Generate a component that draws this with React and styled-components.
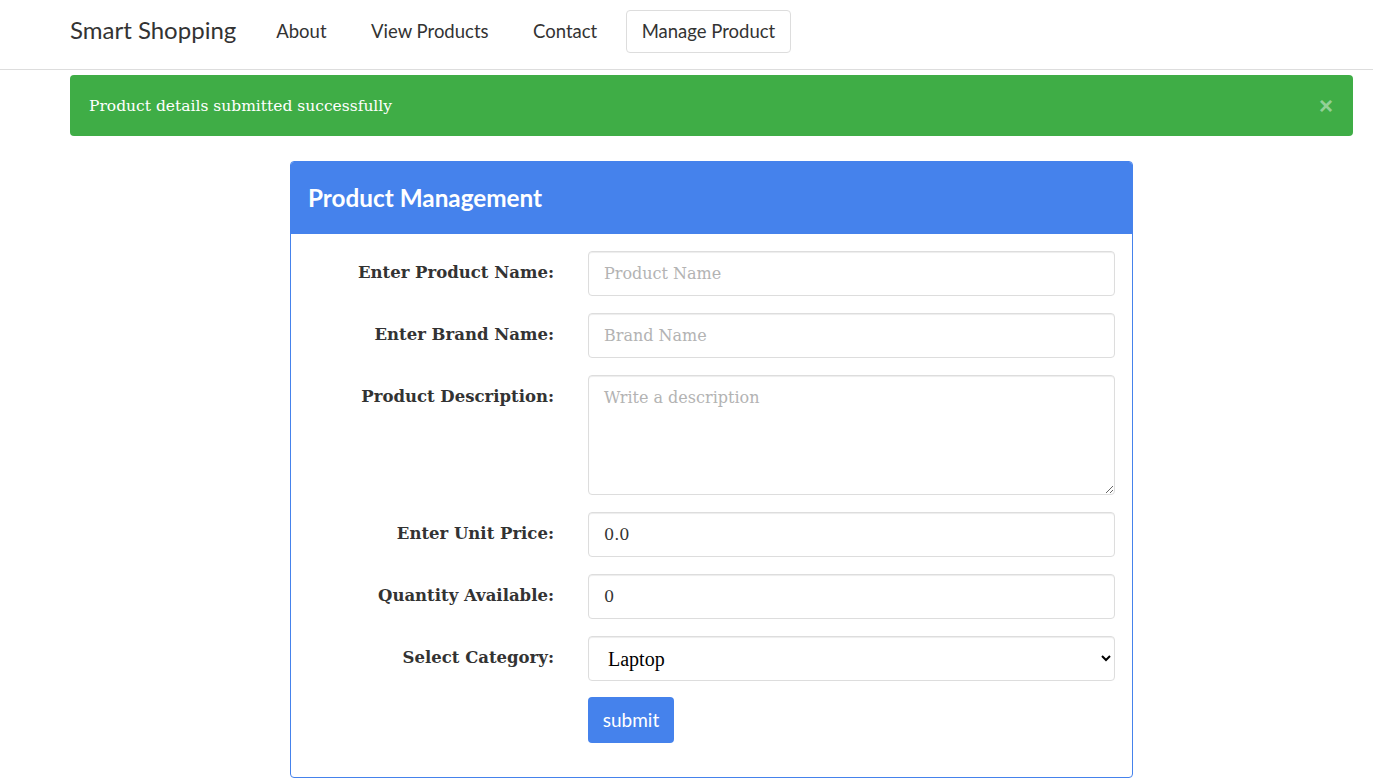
import styled, { createGlobalStyle } from "styled-components";

const serif = `"DejaVu Serif", "Liberation Serif", serif`;
const sans = `Lato, "Open Sans", sans-serif`;

const GlobalStyle = createGlobalStyle`
  body {
    margin: 0;
    background: #fff;
    font-family: ${serif};
    color: #333;
  }
  * { box-sizing: border-box; }
`;

const Navbar = styled.nav`
  height: 70px;
  border-bottom: 1px solid #dddddd;
  display: flex;
  align-items: flex-start;
  padding: 10px 0 0 70px;
  font-family: ${sans};
`;

const Brand = styled.a`
  font-size: 24px;
  line-height: 40px;
  color: #333;
  margin-right: 24px;
`;

const NavLink = styled.a`
  font-size: 18.5px;
  line-height: 21px;
  color: #333;
  padding: 10px 15px;
  margin-right: ${(p) => (p.$active ? 0 : 12.5)}px;
  border: 1px solid ${(p) => (p.$active ? "#dddddd" : "transparent")};
  border-radius: 4px;
`;

const Page = styled.div`
  padding: 5px 20px 20px 70px;
`;

const Alert = styled.div`
  height: 61px;
  background: #3fad46;
  border-radius: 4px;
  color: #fff;
  display: flex;
  align-items: center;
  justify-content: space-between;
  padding: 0 19px;
  font-size: 15.5px;
`;

const Close = styled.span`
  font-family: "Liberation Sans", Arial, sans-serif;
  font-size: 24px;
  font-weight: bold;
  color: rgba(255, 255, 255, 0.45);
  margin-right: 1px;
`;

const Panel = styled.div`
  width: 843px;
  margin: 25px auto 0;
  border: 1px solid #4582ec;
  border-radius: 4px;
  overflow: hidden;
`;

const PanelHeading = styled.div`
  height: 73px;
  background: #4582ec;
  color: #fff;
  display: flex;
  align-items: center;
  padding-left: 17px;
  margin-top: -1px;
  font-family: ${sans};
  font-weight: bold;
  font-size: 24.3px;
`;

const Form = styled.form`
  display: grid;
  grid-template-columns: 1fr 527px;
  column-gap: 34px;
  row-gap: 17px;
  padding: 17px 17px 34px;
`;

const Label = styled.label`
  text-align: right;
  font-weight: bold;
  font-size: 16.5px;
  padding-top: 12px;
`;

const fieldBox = `
  width: 100%;
  border: 1px solid #dddddd;
  border-radius: 4px;
  padding: 0 15px;
  font-family: ${serif};
  font-size: 16px;
  color: #333;
  background: #fff;
  box-shadow: inset 0 1px 1px rgba(0, 0, 0, 0.075);
  &::placeholder { color: #b3b3b3; }
`;

const Input = styled.input`
  ${fieldBox}
  height: 45px;
`;

const TextArea = styled.textarea`
  ${fieldBox}
  height: 120px;
  padding-top: 12px;
`;

const Select = styled.select`
  ${fieldBox}
  height: 45px;
  font-family: "Liberation Serif", serif;
  font-size: 20px;
  color: #000;
`;

const Button = styled.button`
  grid-column: 2;
  justify-self: start;
  height: 46px;
  width: 86px;
  margin-top: -1px;
  border: none;
  border-radius: 4px;
  background: #4582ec;
  color: #fff;
  font-family: ${sans};
  font-size: 19px;
  padding-bottom: 3px;
`;

const fields = [
  { label: "Enter Product Name:", placeholder: "Product Name" },
  { label: "Enter Brand Name:", placeholder: "Brand Name" },
];

export default function App() {
  return (
    <>
      <GlobalStyle />
      <Navbar>
        <Brand>Smart Shopping</Brand>
        <NavLink>About</NavLink>
        <NavLink>View Products</NavLink>
        <NavLink>Contact</NavLink>
        <NavLink $active>Manage Product</NavLink>
      </Navbar>
      <Page>
        <Alert>
          <span>Product details submitted successfully</span>
          <Close>×</Close>
        </Alert>
        <Panel>
          <PanelHeading>Product Management</PanelHeading>
          <Form onSubmit={(e) => e.preventDefault()}>
            {fields.map((f) => [
              <Label key={f.label}>{f.label}</Label>,
              <Input key={f.placeholder} placeholder={f.placeholder} />,
            ])}
            <Label>Product Description:</Label>
            <TextArea placeholder="Write a description" />
            <Label>Enter Unit Price:</Label>
            <Input defaultValue="0.0" />
            <Label>Quantity Available:</Label>
            <Input defaultValue="0" />
            <Label>Select Category:</Label>
            <Select defaultValue="Laptop">
              <option>Laptop</option>
              <option>Mobile</option>
              <option>Tablet</option>
            </Select>
            <Button type="submit">submit</Button>
          </Form>
        </Panel>
      </Page>
    </>
  );
}
